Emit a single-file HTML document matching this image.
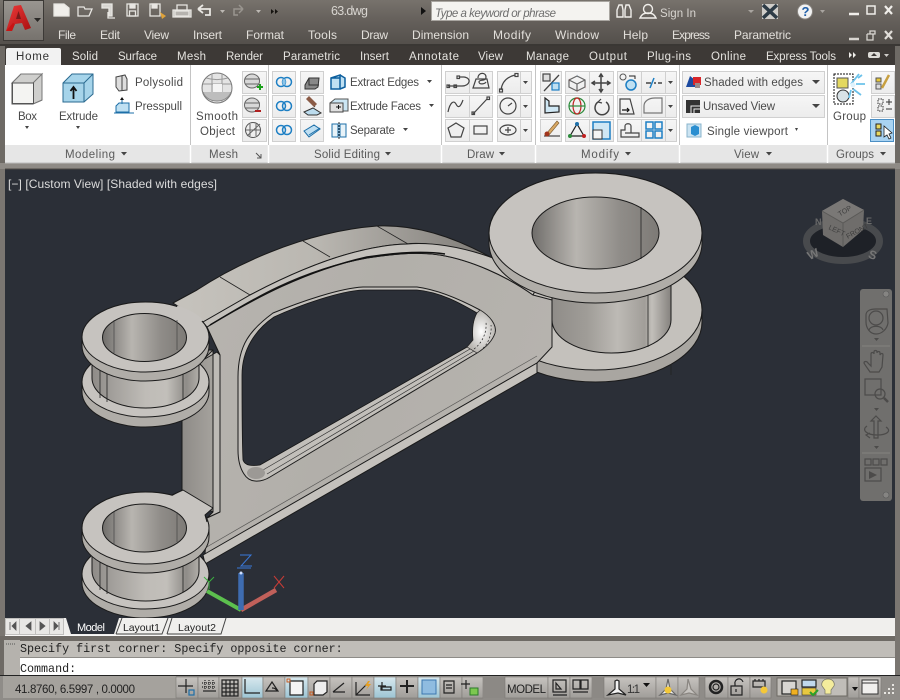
<!DOCTYPE html>
<html><head><meta charset="utf-8"><style>
html,body{margin:0;padding:0;background:#6e6a65;width:900px;height:700px;overflow:hidden}
svg{display:block}
text{font-family:"Liberation Sans",sans-serif;font-size:11.5px}
.m text{fill:#e2dfda;font-size:12px}
.t text{fill:#e4e2de;font-size:11.5px}
.r text{fill:#4a4a4a;font-size:11.5px}
.p text{fill:#5a5a5a;font-size:11.5px}
.b{fill:url(#btn);stroke:#d0d0d0;stroke-width:1}
.k{fill:none;stroke:#444;stroke-width:1.2}
.bl{fill:none;stroke:#1d7fc4;stroke-width:1.5}
.e{stroke:#1a1a1a;stroke-width:1;stroke-linejoin:round}
.l{stroke:#222;stroke-width:.8;fill:none}
.s{fill:url(#sbtn);stroke:#7c7975;stroke-width:.6}
.sb{fill:url(#sblue);stroke:#7c7975;stroke-width:.6}
.si{fill:none;stroke:#222;stroke-width:1.2}
.n{fill:none;stroke:#4c4b4a;stroke-width:1.2}
</style></head><body>
<svg width="900" height="700" viewBox="0 0 900 700" xmlns="http://www.w3.org/2000/svg">
<defs>
<linearGradient id="title" x1="0" y1="0" x2="0" y2="1"><stop offset="0" stop-color="#77726c"/><stop offset=".45" stop-color="#65605b"/><stop offset="1" stop-color="#534f4b"/></linearGradient>
<linearGradient id="btn" x1="0" y1="0" x2="0" y2="1"><stop offset="0" stop-color="#f6f6f6"/><stop offset="1" stop-color="#ececec"/></linearGradient>
<linearGradient id="sbtn" x1="0" y1="0" x2="0" y2="1"><stop offset="0" stop-color="#c6c3bf"/><stop offset="1" stop-color="#a09d99"/></linearGradient>
<linearGradient id="sblue" x1="0" y1="0" x2="0" y2="1"><stop offset="0" stop-color="#d8e8ee"/><stop offset="1" stop-color="#9dc5d4"/></linearGradient>
<linearGradient id="abtn" x1="0" y1="0" x2="0" y2="1"><stop offset="0" stop-color="#9a9691"/><stop offset="1" stop-color="#76726d"/></linearGradient>
<linearGradient id="red" x1="0" y1="0" x2="1" y2="1"><stop offset="0" stop-color="#ee3a3a"/><stop offset="1" stop-color="#a81010"/></linearGradient>
<linearGradient id="cyl" x1="0" y1="0" x2="1" y2="0"><stop offset="0" stop-color="#8e8b87"/><stop offset=".2" stop-color="#a3a09c"/><stop offset=".5" stop-color="#bfbcb7"/><stop offset=".7" stop-color="#c2bfba"/><stop offset=".88" stop-color="#8f8c88"/><stop offset="1" stop-color="#b0ada8"/></linearGradient>
<linearGradient id="cyl2" x1="0" y1="0" x2="1" y2="0"><stop offset="0" stop-color="#8f8c88"/><stop offset=".3" stop-color="#a09d98"/><stop offset=".55" stop-color="#bdbab5"/><stop offset=".78" stop-color="#a19e99"/><stop offset=".84" stop-color="#c2bfba"/><stop offset="1" stop-color="#85827e"/></linearGradient>
<linearGradient id="hole" x1="0" y1="0" x2="1" y2="0"><stop offset="0" stop-color="#6f6d6a"/><stop offset=".2" stop-color="#9a9793"/><stop offset=".35" stop-color="#b8b5b0"/><stop offset=".7" stop-color="#8f8c88"/><stop offset="1" stop-color="#7d7a76"/></linearGradient>
<linearGradient id="arm" x1="0" y1="0" x2="1" y2=".3"><stop offset="0" stop-color="#b7b4af"/><stop offset=".5" stop-color="#b2afaa"/><stop offset="1" stop-color="#b6b3ae"/></linearGradient>
<linearGradient id="band" x1="0" y1="0" x2="1" y2="0"><stop offset="0" stop-color="#c6c3bd"/><stop offset=".45" stop-color="#bab7b1"/><stop offset=".7" stop-color="#9f9c97"/><stop offset="1" stop-color="#7d7a75"/></linearGradient>
<linearGradient id="web" x1="0" y1="0" x2="1" y2="0"><stop offset="0" stop-color="#8e8b87"/><stop offset="1" stop-color="#a5a29d"/></linearGradient>
<radialGradient id="glow" cx=".5" cy=".5" r=".5"><stop offset="0" stop-color="#fff"/><stop offset="1" stop-color="#b8b5b0"/></radialGradient>
</defs>

<!-- frame + title bars -->
<rect width="900" height="45" fill="url(#title)"/>
<rect y="44" width="900" height="2" fill="#3a3734"/>
<rect y="46" width="900" height="19" fill="#3d3936"/>
<rect y="46" width="5" height="122" fill="#6e6a65"/>
<rect x="895" y="46" width="5" height="122" fill="#6e6a65"/>
<rect y="163" width="900" height="6" fill="#8f8b86"/>
<rect x="5" y="65" width="890" height="98" fill="#fff"/>
<rect x="5" y="145" width="890" height="18" fill="#e6e6e6"/>
<path d="M5 163H895" stroke="#bcbcbc"/>

<!-- A button -->
<rect x="3.500" y=".5" width="40" height="40" fill="url(#abtn)" stroke="#3c3936"/>
<path d="M6 31 14 6 21 5 31 28 25 30 22 23 15 24 12 31Z" fill="url(#red)"/>
<path d="M16 19 18.500 11 21 19Z" fill="#7a1a1a"/>
<path d="M6 31 12 31 15 24 13 23Z" fill="#c81414"/>
<path d="M34 18h7l-3.500 4z" fill="#2a2826"/>

<!-- QAT -->
<g fill="none" stroke="#e8e6e2" stroke-width="1.3">
<path d="M54 4h10l5 4v8H54z" fill="#f0eeea"/>
<path d="M78 7h6l1 2h7l-3 7H78z"/><path d="M102 4h10v12h-3v-8h-7z" fill="#d8d6d2"/><path d="M108 12v6h7"/>
<path d="M127 4h11v12h-11z"/><rect x="130" y="4" width="5" height="4" fill="#e8e6e2"/><rect x="129.500" y="11" width="6" height="5"/>
<path d="M150 4h10v12h-10z"/><rect x="152" y="4" width="5" height="4" fill="#e8e6e2"/>
<path d="M175 11h14v5h-14z"/><path d="M177 11V5h10v6"/><path d="M173 10h18v7h-18z" fill="#e8e6e2" fill-opacity=".6"/>
<path d="M198 9h12v6h-5M198 9l5-4M198 9l5 4" stroke-width="1.800"/>
<path d="M243 9h-9v6h4M243 9l-4-4M243 9l-4 4" stroke="#99958f" stroke-width="1.500"/>
</g>
<path d="M160 12l6 4-4 3z" fill="#e0a33a"/>
<path d="M220 10h5l-2.500 3zM256 10h5l-2.500 3z" fill="#bdb9b4"/>
<path d="M271 9l3 2.500-3 2.500zM275 9l3 2.500-3 2.500z" fill="#15130f"/>
<text x="331" y="15" fill="#d8d5d0" style="font-size:12.500px" textLength="37">63.dwg</text>
<path d="M421 7l5 4-5 4z" fill="#111"/>
<rect x="431.500" y="1.500" width="178" height="19" fill="#f4f3f0" stroke="#a9a6a1"/>
<text x="435" y="17" fill="#6d6d6d" style="font-size:11.500px;font-style:italic" textLength="121">Type a keyword or phrase</text>
<g fill="none" stroke="#f0eeea" stroke-width="1.400">
<path d="M617 17v-7l2-5h3l1 5v7h-6zM625 17v-7l1-5h3l2 5v7h-6z"/>
<circle cx="648" cy="9" r="4.500"/><path d="M640 18c2-4 4-5 8-5s6 1 8 5z"/>
</g>
<text x="660" y="17" fill="#d8d5d0" textLength="36">Sign In</text>
<path d="M748 10h6l-3 3z" fill="#a9a5a0"/>
<rect x="762" y="4" width="16" height="15" fill="#cfcdc9"/><path d="M763 5l14 13M777 5l-14 13" stroke="#2d3b46" stroke-width="3.500"/>
<circle cx="805" cy="11.500" r="7.500" fill="#f2f2f2" stroke="#8a8681"/><text x="801.500" y="16" fill="#1f5ea8" style="font-size:13px;font-weight:bold">?</text>
<path d="M820 10h5l-2.500 3z" fill="#a9a5a0"/>
<path d="M849 14h10" stroke="#f0eeea" stroke-width="2.500"/>
<rect x="867" y="6" width="8" height="8" fill="none" stroke="#f0eeea" stroke-width="1.500"/>
<path d="M885 6l7 8M892 6l-7 8" stroke="#f0eeea" stroke-width="2.200"/>
<path d="M849 39h10" stroke="#d8d5d0" stroke-width="2.500"/>
<path d="M867 34h8v-3h-5v3M867 34v6h6v-6" fill="none" stroke="#d8d5d0" stroke-width="1.300"/>
<path d="M885 31l7 8M892 31l-7 8" stroke="#e0ddd8" stroke-width="2.200"/>

<!-- menu -->
<g class="m">
<text x="58" y="39" textLength="18">File</text><text x="100" y="39" textLength="20">Edit</text><text x="144" y="39" textLength="25">View</text><text x="193" y="39" textLength="29">Insert</text><text x="246" y="39" textLength="38">Format</text><text x="308" y="39" textLength="29">Tools</text><text x="361" y="39" textLength="27">Draw</text><text x="412" y="39" textLength="57">Dimension</text><text x="493" y="39" textLength="38">Modify</text><text x="555" y="39" textLength="44">Window</text><text x="623" y="39" textLength="25">Help</text><text x="672" y="39" textLength="38">Express</text><text x="734" y="39" textLength="57">Parametric</text>
</g>

<!-- tabs -->
<path d="M6 65V50q0-2 2-2h51q2 0 2 2v15z" fill="#f2f2f2"/>
<text x="16" y="60" fill="#333" textLength="33">Home</text>
<g class="t">
<text x="72" y="60" textLength="26">Solid</text><text x="118" y="60" textLength="39">Surface</text><text x="177" y="60" textLength="29">Mesh</text><text x="226" y="60" textLength="37">Render</text><text x="283" y="60" textLength="57">Parametric</text><text x="360" y="60" textLength="29">Insert</text><text x="409" y="60" textLength="50">Annotate</text><text x="478" y="60" textLength="25">View</text><text x="526" y="60" textLength="43">Manage</text><text x="589" y="60" textLength="38">Output</text><text x="647" y="60" textLength="44">Plug-ins</text><text x="711" y="60" textLength="35">Online</text><text x="766" y="60" textLength="70">Express Tools</text>
</g>
<path d="M849 52l3 3-3 3zM853 52l3 3-3 3z" fill="#f0eeea"/>
<rect x="868" y="52" width="12" height="6" rx="2" fill="#dedcd8"/><path d="M871 56l3-3 3 3z" fill="#3d3936"/><path d="M884 54h5l-2.500 3z" fill="#cfcdc9"/>

<!-- panel seps -->
<g stroke="#c4c4c4"><path d="M190.500 65V163M268.500 65V163M441.500 65V163M535.500 65V163M679.500 65V163M827.500 65V163"/></g>
<g stroke="#fff" stroke-width="1.500"><path d="M190.500 145V163M268.500 145V163M441.500 145V163M535.500 145V163M679.500 145V163M827.500 145V163"/></g>

<!-- large icons -->
<path d="M12 83l9-9h21v26l-9 4H12z" fill="#f0f0ee" stroke="#555"/><path d="M33 83h-21l9-9h21zM33 83l9-9v26l-9 4z" fill="#cfcfcd" stroke="#777"/><rect x="12.500" y="83" width="21" height="20.500" fill="#f4f4f2" stroke="#555"/>
<path d="M63 83l9-9h21v20l-9 8H63z" fill="#a6d4ea" stroke="#2a6a90"/><path d="M63 83h21l9-9M84 83v19" fill="none" stroke="#2a6a90"/><path d="M73.500 99V88M70.500 91l3-4 3 4" fill="none" stroke="#111" stroke-width="1.800"/>
<path d="M116 77l9-2 2 4v11l-8 1-3-4z" fill="#ddd" stroke="#444"/><path d="M122 76v15" stroke="#444"/>
<path d="M116 112h13v-9h-10l-3 3zM114 113h20M122 99v5" fill="#bfe0f2" stroke="#1d6fa8"/><path d="M122 97l-2 3h4z" fill="#111"/>
<circle cx="217" cy="88" r="15" fill="#e4e4e4" stroke="#777"/><path d="M203 84h28M206 78c7 2 15 2 22 0M212 74v28M222 74v28" stroke="#999" fill="none"/><rect x="213" y="84" width="9" height="9" fill="#f4f4f4"/><path d="M203 92c4 12 24 12 28 0" fill="#bdbdbd" stroke="#888"/>

<!-- dropdown arrows -->
<g fill="#444"><path d="M25 126h4l-2 3zM76 126h4l-2 3zM427 80h5l-2.500 3zM429 104h5l-2.500 3zM403 128h5l-2.500 3zM121 152h6l-3 3.500zM385 152h6l-3 3.500zM499 152h6l-3 3.500zM625 152h6l-3 3.500zM766 152h6l-3 3.500zM880 152h6l-3 3.500z"/></g>
<path d="M256 153l5 5M261 154v4h-4" fill="none" stroke="#555"/>
<path d="M795 128h3l-1.500 3z" fill="#444"/>

<!-- small buttons -->
<g>
<rect class="b" x="242.500" y="71.500" width="24" height="22"/><rect class="b" x="242.500" y="95.500" width="24" height="22"/><rect class="b" x="242.500" y="119.500" width="24" height="22"/>
<rect class="b" x="272.500" y="71.500" width="23" height="22"/><rect class="b" x="272.500" y="95.500" width="23" height="22"/><rect class="b" x="272.500" y="119.500" width="23" height="22"/>
<rect class="b" x="300.500" y="71.500" width="23" height="22"/><rect class="b" x="300.500" y="95.500" width="23" height="22"/><rect class="b" x="300.500" y="119.500" width="23" height="22"/>
<rect class="b" x="445.500" y="71.500" width="24" height="22"/><rect class="b" x="469.500" y="71.500" width="23" height="22"/><rect class="b" x="497.500" y="71.500" width="23" height="22"/><rect class="b" x="520.500" y="71.500" width="11" height="22"/>
<rect class="b" x="445.500" y="95.500" width="24" height="22"/><rect class="b" x="469.500" y="95.500" width="23" height="22"/><rect class="b" x="497.500" y="95.500" width="23" height="22"/><rect class="b" x="520.500" y="95.500" width="11" height="22"/>
<rect class="b" x="445.500" y="119.500" width="24" height="22"/><rect class="b" x="469.500" y="119.500" width="23" height="22"/><rect class="b" x="497.500" y="119.500" width="23" height="22"/><rect class="b" x="520.500" y="119.500" width="11" height="22"/>
<rect class="b" x="540.500" y="71.500" width="21" height="22"/><rect class="b" x="540.500" y="95.500" width="21" height="22"/><rect class="b" x="540.500" y="119.500" width="21" height="22"/>
<rect class="b" x="565.500" y="71.500" width="24" height="22"/><rect class="b" x="589.500" y="71.500" width="24" height="22"/><rect class="b" x="565.500" y="95.500" width="24" height="22"/><rect class="b" x="589.500" y="95.500" width="24" height="22"/><rect class="b" x="565.500" y="119.500" width="24" height="22"/><rect class="b" x="589.500" y="119.500" width="24" height="22"/>
<rect class="b" x="617.500" y="71.500" width="24" height="22"/><rect class="b" x="641.500" y="71.500" width="24" height="22"/><rect class="b" x="665.500" y="71.500" width="11" height="22"/>
<rect class="b" x="617.500" y="95.500" width="24" height="22"/><rect class="b" x="641.500" y="95.500" width="24" height="22"/><rect class="b" x="665.500" y="95.500" width="11" height="22"/>
<rect class="b" x="617.500" y="119.500" width="24" height="22"/><rect class="b" x="641.500" y="119.500" width="24" height="22"/><rect class="b" x="665.500" y="119.500" width="11" height="22"/>
<rect class="b" x="682.500" y="71.500" width="142" height="22"/><rect class="b" x="682.500" y="95.500" width="142" height="22"/>
<rect class="b" x="871.500" y="71.500" width="23" height="22"/><rect class="b" x="871.500" y="95.500" width="23" height="22"/><rect x="870.500" y="119.500" width="23" height="22" fill="#a9d3f2" stroke="#4c8fc4"/>
</g>
<g fill="#444"><path d="M523 81h5l-2.500 3zM523 105h5l-2.500 3zM523 129h5l-2.500 3zM668 81h5l-2.500 3zM668 105h5l-2.500 3zM668 129h5l-2.500 3zM812 80h8l-4 4zM812 104h8l-4 4z"/></g>

<!-- ribbon text (after buttons) -->
<g class="r">
<text x="135" y="86" textLength="48">Polysolid</text><text x="135" y="110" textLength="47">Presspull</text><text x="18" y="120" textLength="19">Box</text><text x="59" y="120" textLength="39">Extrude</text><text x="196" y="120" textLength="42">Smooth</text><text x="200" y="135" textLength="35">Object</text><text x="350" y="86" textLength="69">Extract Edges</text><text x="350" y="110" textLength="71">Extrude Faces</text><text x="350" y="134" textLength="45">Separate</text><text x="704" y="86" textLength="99">Shaded with edges</text><text x="703" y="110" textLength="72">Unsaved View</text><text x="707" y="135" textLength="81">Single viewport</text><text x="833" y="120" textLength="33">Group</text>
</g>
<g class="p">
<text x="65" y="158" textLength="50">Modeling</text><text x="209" y="158" textLength="29">Mesh</text><text x="314" y="158" textLength="66">Solid Editing</text><text x="467" y="158" textLength="27">Draw</text><text x="581" y="158" textLength="38">Modify</text><text x="734" y="158" textLength="25">View</text><text x="836" y="158" textLength="38">Groups</text>
</g>

<!-- mesh small icons -->
<g fill="#d8d8d8" stroke="#666"><ellipse cx="252" cy="81" rx="7.500" ry="7"/><ellipse cx="252" cy="105" rx="7.500" ry="7"/></g>
<path d="M245 79h15M245 84h14M245 103h15M245 108h14" stroke="#666"/>
<path d="M257 87h6M260 84v6" stroke="#1aa01a" stroke-width="2" fill="none"/>
<path d="M255 111h6" stroke="#b02020" stroke-width="2"/>
<circle cx="253" cy="130" r="7.500" fill="#eee" stroke="#555"/><path d="M247 136l13-12M250 124v12M256 124v12M246 130h14" stroke="#666" fill="none"/>

<!-- solid editing icons -->
<g class="bl"><circle cx="281" cy="82" r="4.500"/><circle cx="287" cy="82" r="4.500"/><circle cx="281" cy="106" r="4.500"/><circle cx="287" cy="106" r="4.500"/><circle cx="281" cy="130" r="4.500"/><circle cx="287" cy="130" r="4.500"/></g>
<path d="M284 78.500a4.500 4.500 0 0 1 0 7a4.500 4.500 0 0 1 0-7z" fill="#8cc4e8"/>
<path d="M305 85l4-7h10l-1 9-3 2h-10z" fill="#888" stroke="#333"/><path d="M309 78v7h10" fill="none" stroke="#333"/>
<path d="M304 112l9-4 8 5-4 2h-9zM307 99l8 8" fill="#bcdcee" stroke="#333"/><path d="M306 99l3-3 8 8-3 3z" fill="#8a5a45"/>
<path d="M304 131l10-6 6 4-11 8z" fill="#bfdff2" stroke="#1d6fa8"/><path d="M309 135l11-7" stroke="#1d6fa8"/>
<path d="M331 78l9-3v14h-9zM331 78h9M340 75l5 3v9l-5 2" fill="#bfe0f2" stroke="#0c5f9e" stroke-width="1.500"/>
<path d="M330 103l5-4h13v12h-18z" fill="#cbe6f4" stroke="#555"/><path d="M330 103h13v9h-13z" fill="#e0e0e0" stroke="#444"/><path d="M336 107h5M338.500 105v4" stroke="#111"/>
<path d="M332 124h6v13h-6zM340 124h6v13h-6z" fill="#e8f3f9" stroke="#1d6fa8"/><path d="M339 122v18" stroke="#333" stroke-dasharray="2 1"/>

<!-- draw icons -->
<g class="k">
<path d="M448 86h6l2 0h6c8 0 10-8 2-9h-5"/><rect x="447" y="85" width="2.500" height="2.500"/><rect x="454" y="85" width="2.500" height="2.500"/><rect x="457" y="76" width="2.500" height="2.500"/>
<path d="M473 88l3-9h11l2 9zM478 78c0-6 8-6 8-1s-7 2-7 5 6 2 7 0"/>
<path d="M501 90c1-8 6-13 14-15"/><rect x="499.500" y="89" width="3" height="3"/><rect x="515" y="73.500" width="3" height="3"/>
<path d="M448 112c2-10 6-12 8-8s4 4 7-4"/><path d="M473 114l14-15"/><rect x="472" y="112" width="2.500" height="2.500"/><rect x="487" y="97" width="2.500" height="2.500"/>
<circle cx="508" cy="106" r="8"/><path d="M508 106l4-3"/><path d="M456 123l8 5-3 9h-10l-3-9z" fill="#efefef"/>
<rect x="474" y="126" width="13" height="8"/><ellipse cx="508" cy="130" rx="8" ry="5"/><path d="M505 130h6M508 127v6"/>
</g>
<!-- modify icons -->
<g class="k">
<rect x="543" y="74" width="7" height="7" fill="#ddd"/><path d="M544 91l15-16" stroke-width="1.300"/>
<rect x="552" y="83" width="7" height="7" fill="#bfe0f2" stroke="#1d7fc4"/>
<path d="M545 113V98l4 3v5h10v6z" fill="#cfe7f4" stroke="#222"/>
<path d="M577 76l8 4v7l-8 4-8-4v-7z" stroke="#666"/><path d="M569 80l8 4 8-4M577 84v7" stroke="#666"/>
<path d="M601 75v16M593 83h16M599 77l2-3 2 3M599 89l2 3 2-3M595 81l-3 2 3 2M607 81l3 2-3 2" stroke-width="1.500"/>
<ellipse cx="577" cy="106" rx="8" ry="8" stroke="#2a8a3a"/><ellipse cx="577" cy="106" rx="4" ry="8" stroke="#c02020"/><path d="M569 106h16" stroke="#2a8a3a"/>
<path d="M606 102a7 7 0 1 1-8 0" stroke-width="1.500"/><path d="M601 99l-3 3 4 1" stroke-width="1.200"/>
<path d="M544 136h16"/>
<path d="M577 124l-7 12h14z" stroke="#222" stroke-width="1.200"/>
<path d="M620 114v-15h10l4 15z"/><path d="M622 110h7M627 108l2 2-2 2" stroke="#111"/>
<path d="M644 113v-7c0-5 5-8 11-8h7v15z" stroke="#777"/>
<path d="M621 137h18v-4h-8v-7c0-3-6-3-6 0v4h-4z M625 133h10"/>
</g>
<path d="M546 134l11-13 2 2-10 12z" fill="#d8a864" stroke="#7a5a30" stroke-width=".6"/><circle cx="547" cy="134" r="2.500" fill="#a0341c"/>
<circle cx="570" cy="136" r="2" fill="#2a8a3a"/><circle cx="584" cy="136" r="2" fill="#c02020"/><circle cx="577" cy="124" r="2" fill="#1d6fa8"/>
<path d="M569 80h.1M585 87h.1M577 91h.1" stroke="#c02020" stroke-width="3"/><path d="M577 76h.1" stroke="#1d7fc4" stroke-width="3"/>
<rect x="593" y="122" width="17" height="17" fill="#cfe7f4" stroke="#1d7fc4" stroke-width="1.500"/><rect x="593" y="130" width="9" height="9" fill="#f4f4f4" stroke="#333"/>
<circle cx="623" cy="77" r="3" fill="none" stroke="#555"/><circle cx="631" cy="85" r="5" fill="#bfe0f2" stroke="#1d7fc4" stroke-width="1.500"/><path d="M629 76h6v3" stroke="#222" fill="none"/>
<path d="M646 83h5M654 83h2M658 83h4" stroke="#222" stroke-width="1.300"/><path d="M650 88l4-10" stroke="#1d7fc4" stroke-width="1.500"/>
<rect x="646" y="122" width="7" height="7" fill="none" stroke="#1d7fc4" stroke-width="1.500"/><rect x="655" y="122" width="7" height="7" fill="none" stroke="#1d7fc4" stroke-width="1.500"/><rect x="646" y="131" width="7" height="7" fill="none" stroke="#1d7fc4" stroke-width="1.500"/><rect x="655" y="131" width="7" height="7" fill="none" stroke="#1d7fc4" stroke-width="1.500"/>
<!-- view icons -->
<path d="M686 87l4-11 5 4v7z" fill="#1c4aa0"/><rect x="693" y="77" width="8" height="8" fill="#d8262a"/><rect x="695" y="83" width="5" height="5" fill="#9a8a8a"/>
<rect x="686" y="100" width="14" height="13" fill="#333"/><path d="M691 113v-7h9M694 113v-4h6" stroke="#eee" fill="none"/>
<rect x="687" y="124" width="14" height="13" fill="#cce4f2" stroke="#8ab4cc"/><path d="M691 127l4-2 4 2v7l-4 2-4-2z" fill="#2a8ed0"/>
<!-- group -->
<rect x="834" y="74" width="19" height="30" fill="none" stroke="#111" stroke-dasharray="2 1"/>
<rect x="837" y="78" width="11" height="10" fill="#e4d860" stroke="#555"/><circle cx="843" cy="96" r="6" fill="#d8e2e6" stroke="#333"/>
<path d="M851 84l8-10M856 84h9M853 89l8 6M851 90l-2 8M858 78l4-3" stroke="#6cc2ea" stroke-width="1.800"/><circle cx="853" cy="85" r="2.500" fill="#dff2fc"/>
<rect x="876" y="78" width="5" height="4" fill="#e8c838" stroke="#555"/><rect x="876" y="84" width="5" height="5" fill="#ddd" stroke="#555"/><path d="M882 88l7-13" stroke="#c8a040" stroke-width="2.500"/>
<path d="M878 99h5v5h-5zM878 106h5v5h-5z" fill="none" stroke="#333" stroke-dasharray="1.500 1"/><path d="M886 102h6M889 99v6M886 109h6" stroke="#333"/>
<path d="M876 124h5v5h-5zM876 131h5v5h-5z" fill="#e8d860" stroke="#222"/><path d="M884 126v11l3-2 2 4 2-1-2-4 3-1z" fill="#fff" stroke="#222" stroke-width=".8"/>

<!-- viewport -->
<rect x="5" y="169" width="890" height="449" fill="#2b2f37"/>
<path d="M5 169H895" stroke="#4c4844"/>

<!-- model -->
<g>
<!-- web -->
<path d="M182 405V495L213 512V350H190Z" fill="url(#web)" class="e"/>
<path d="M203 360 217 352 220 355V512L207 518 213 512V350Z" fill="#bdbab5" class="e"/>
<!-- big ring lower flange -->
<path d="M489 310a106.500 60 0 0 1 213 0v12a106.500 60 0 0 1-213 0z" fill="#a9a6a1" class="e"/>
<ellipse cx="595.500" cy="310" rx="106.500" ry="60" fill="#c4c1bc" class="e"/>
<path d="M671 364v11" class="l"/>
<!-- upper band -->
<path d="M173 303 197 290C230 268 300 232 377 226 420 224 460 240 492 258 460 246 420 242 407 244 370 245 320 258 250 295L203 322Z" fill="url(#band)" class="e"/>
<path d="M220 277 250 295M303 241 330 257M377 226 408 244" class="l"/>
<!-- arm face -->
<path d="M207 327C250 300 300 270 367 258 400 253 420 252 440 255 470 260 505 275 533 295L552 300V347L537 363 205 555 207 518 220 512V355Z" fill="url(#arm)" class="e"/>
<!-- strip between band and arm -->
<path d="M203 322 250 295C320 258 370 245 407 244 430 242 460 246 493 258L538 285 533 295C505 275 470 260 440 255 420 252 400 253 367 258 300 270 250 300 207 327Z" fill="#c4c1bc" class="e"/>
<path d="M210 322C255 295 305 268 367 254 400 249 425 248 445 251" stroke="#111" stroke-width="1.500" fill="none" transform="translate(0 3)"/>
<!-- arm lower side -->
<path d="M203 555 537 363V373L205 564Z" fill="#c4c1bc" class="e"/>
<path d="M205 548 537 356" stroke="#333" stroke-width=".7" fill="none" opacity=".7"/>
<!-- hole wall -->
<path d="M238 377C238 345 250 330 273 313 300 302 340 288 363 287L417 287C440 290 465 302 480 310 490 316 497 325 495 333 492 342 485 348 477 353L270 477C262 482 250 484 244 474 240 468 238 460 238 450Z" fill="#c2bfba" class="e"/>
<!-- hole dark -->
<path d="M242 375C242 350 255 330 274 317 300 305 340 291 363 290L417 290C440 292 460 303 477 313 473 320 472 330 473 340L467 347 260 465C252 466 245 466 243 460 242 440 242 400 242 375Z" fill="#2b2f37" stroke="#151515" stroke-width=".8"/>
<path d="M467 347 477 353C485 348 492 342 495 333 497 325 490 316 480 310L477 313C473 320 472 330 473 340Z" fill="url(#glow)" stroke="#222" stroke-width=".7"/>
<path d="M474 349C482 343 487 333 486 322M480 351C488 345 492 335 491 325" stroke="#222" stroke-dasharray="2 2" fill="none" stroke-width=".7"/>
<path d="M263 470 470 349M267 474 474 351" stroke="#333" stroke-width=".7" fill="none"/>
<ellipse cx="256" cy="473" rx="9" ry="6" fill="#9c9995"/>
<!-- big ring core & top -->
<path d="M552 280V320A59.500 33 0 0 0 671 320V280Z" fill="url(#cyl2)" class="e"/>
<path d="M648 292V347" class="l"/>
<path d="M489 233a106.500 60 0 0 1 213 0v10a106.500 60 0 0 1-213 0z" fill="#b0ada8" class="e"/>
<ellipse cx="595.500" cy="233" rx="106.500" ry="60" fill="#c6c3bf" class="e"/>
<ellipse cx="595.500" cy="233" rx="63.500" ry="36" fill="url(#hole)" class="e"/>
<path d="M641 207V259" class="l"/>
<!-- upper-left ring -->
<path d="M82 382a63.500 35 0 0 1 127 0v10a63.500 35 0 0 1-127 0z" fill="#b0ada8" class="e"/>
<ellipse cx="145.500" cy="382" rx="63.500" ry="35" fill="#c6c3bf" class="e"/>
<path d="M92 345V378A53.500 30 0 0 0 199 378V345Z" fill="url(#cyl)" class="e"/>
<path d="M100 350V398M107 350V402M183 350V400" class="l"/>
<path d="M82 337a63.500 35 0 0 1 127 0v9a63.500 35 0 0 1-127 0z" fill="#b0ada8" class="e"/>
<ellipse cx="145.500" cy="337" rx="63.500" ry="35" fill="#c6c3bf" class="e"/>
<path d="M177 307Q195 313 202 321" stroke="#c6c3bf" stroke-width="3" fill="none"/>
<ellipse cx="144.500" cy="337.500" rx="42" ry="24" fill="url(#hole)" class="e"/>
<path d="M114 320V353M177 320V350" stroke="#444" stroke-width=".7"/>
<!-- lower-left ring -->
<path d="M82 574a63.500 35 0 0 1 127 0v9a63.500 35 0 0 1-127 0z" fill="#b0ada8" class="e"/>
<ellipse cx="145.500" cy="574" rx="63.500" ry="35" fill="#c6c3bf" class="e"/>
<path d="M92 538V571A53.500 30 0 0 0 199 571V538Z" fill="url(#cyl)" class="e"/>
<path d="M100 545V590M107 545V594M183 545V592" class="l"/>
<path d="M82 528a63.500 36 0 0 1 127 0v9a63.500 36 0 0 1-127 0z" fill="#b0ada8" class="e"/>
<ellipse cx="145.500" cy="528" rx="63.500" ry="36" fill="#c6c3bf" class="e"/>
<path d="M172 496 183 490 213 508 205 515 207 522 195 515 175 500Z" fill="#c6c3bf"/>
<path d="M172 495 183 490 213 508 205 515 207 522" fill="none" class="e"/>
<ellipse cx="144.500" cy="528" rx="42" ry="24" fill="url(#hole)" class="e"/>
<path d="M114 512V545M177 512V542" stroke="#444" stroke-width=".7"/>
</g>

<!-- UCS -->
<path d="M241 610 207 591" stroke="#5cc04e" stroke-width="4"/>
<path d="M241 610 276 590" stroke="#c0605a" stroke-width="4.500"/>
<path d="M241 610V573" stroke="#3e6cb0" stroke-width="5.500"/>
<circle cx="241" cy="573" r="1.500" fill="#cfe0ff"/>
<path d="M240 555h11l-10 11h11M237 568h14" stroke="#3a78d8" fill="none" stroke-width="1"/>
<path d="M274 576l10 12M284 576l-10 12" stroke="#c83c36" fill="none"/>
<path d="M204 577l5 5 5-5M209 582v7" stroke="#3cb040" fill="none"/>

<!-- label -->
<text x="8" y="188" fill="#dcdcdc" style="font-size:12px" textLength="209">[−] [Custom View] [Shaded with edges]</text>

<!-- viewcube -->
<ellipse cx="843" cy="241" rx="36.500" ry="19.500" fill="#1e2127" stroke="#484a4d" stroke-width="7"/>
<path d="M843 199 864 210 863 230 843 247 823 235 822 211Z" fill="#6f6d6b"/>
<path d="M843 199 864 210 843 223 822 211Z" fill="#7a7876"/>
<path d="M843 223V247M822 211 843 223 864 210" stroke="#5a5957" fill="none"/>
<text x="837" y="214" fill="#3e3e3e" style="font-size:7px" transform="rotate(-30 843 210)">TOP</text>
<text x="829" y="231" fill="#3e3e3e" style="font-size:7px" transform="rotate(25 833 228)">LEFT</text>
<text x="845" y="236" fill="#3e3e3e" style="font-size:7px" transform="rotate(-28 852 232)">FRONT</text>
<text x="807" y="258" fill="#767676" style="font-size:12px;font-weight:bold" transform="rotate(-25 813 253)">W</text>
<text x="869" y="259" fill="#767676" style="font-size:12px;font-weight:bold" transform="rotate(20 873 254)">S</text>
<text x="815" y="225" fill="#6a6a6a" style="font-size:9px;font-weight:bold">N</text>
<text x="866" y="224" fill="#6a6a6a" style="font-size:9px;font-weight:bold">E</text>

<!-- navbar -->
<rect x="860" y="289" width="32" height="212" rx="3" fill="#706f6d"/>
<circle cx="886" cy="294" r="3" fill="#858482" stroke="#5a5a5a" stroke-width=".6"/>
<circle cx="886" cy="495" r="3" fill="#858482" stroke="#5a5a5a" stroke-width=".6"/>
<g class="n">
<path d="M866 315c0-4 4-6 10-6h11l1 14c-1 6-6 11-12 11s-10-6-10-12z"/><circle cx="876" cy="318" r="7"/><path d="M869 330c2-5 12-5 14 0"/>
<path d="M862 346h28M862 453h28" stroke="#807f7d"/>
<path d="M870 372c-2-3-5-7-6-9 0-2 3-2 4 0l3 3 0-12c0-2 3-2 3 0v-2c0-2 3-2 3 0v1c0-2 3-2 3 0v2c1-2 3-2 3 0l-1 12-3 5z"/>
<rect x="865" y="379" width="16" height="16"/><circle cx="880" cy="394" r="5"/><path d="M884 398l4 4" stroke-width="2.500"/>
<path d="M876 416l5 5h-3v17h-4v-17h-3zM867 426c-6 4 0 9 10 9s15-4 9-8M870 433l-4 2 4 3"/>
<rect x="865" y="459" width="6" height="6"/><rect x="873" y="459" width="6" height="6"/><rect x="881" y="459" width="6" height="6"/><rect x="865" y="468" width="16" height="13"/>
</g>
<path d="M869 471l8 4-8 4zM874 338h5l-2.500 3zM874 408h5l-2.500 3zM874 446h5l-2.500 3z" fill="#4c4b4a"/>

<!-- layout tabs -->
<rect x="4" y="618" width="892" height="18" fill="#f0efed"/>
<path d="M4 636H896" stroke="#fff"/>
<g fill="#e8e7e5" stroke="#c0bfbd"><rect x="5.500" y="618.500" width="14" height="16"/><rect x="19.500" y="618.500" width="16" height="16"/><rect x="35.500" y="618.500" width="14" height="16"/><rect x="49.500" y="618.500" width="14" height="16"/></g>
<path d="M10 622v8M16 622l-4 4 4 4z M31 622l-5 4 5 4z M40 622l5 4-5 4z M54 622l4 4-4 4zM59 622v8" fill="#555" stroke="#555" stroke-width=".8"/>
<path d="M66 618 71 634H114L119 618Z" fill="#2b2f37"/>
<path d="M116 634 122 618M168 618 162 634H116M172 618 167 634M226 618 221 634H167" fill="none" stroke="#444"/>
<text x="77" y="631" fill="#fff" style="font-size:11px" textLength="28">Model</text>
<text x="123" y="631" fill="#222" style="font-size:10.500px" textLength="37">Layout1</text>
<text x="178" y="631" fill="#222" style="font-size:10.500px" textLength="38">Layout2</text>

<!-- command -->
<rect x="0" y="636" width="900" height="5" fill="#6e6a65"/>
<rect x="4" y="640" width="16" height="36" fill="#b5b2ad"/>
<path d="M6 644h10" stroke="#555" stroke-dasharray="1 1"/>
<rect x="20" y="641" width="875" height="17" fill="#c0bdb8"/>
<path d="M20 657.500H895" stroke="#8e8c88"/>
<rect x="20" y="658" width="875" height="17" fill="#fff"/>
<text x="20" y="652" fill="#222" style="font-family:'Liberation Mono',monospace;font-size:11.700px">Specify first corner: Specify opposite corner:</text>
<text x="20" y="672" fill="#222" style="font-family:'Liberation Mono',monospace;font-size:11.700px">Command:</text>

<!-- status -->
<rect x="0" y="675" width="900" height="25" fill="#8f8c88"/>
<path d="M0 675.500H900" stroke="#222"/>
<rect x="3" y="676" width="173" height="22" fill="#a5a29d"/>
<text x="15" y="693" fill="#222" textLength="120">41.8760, 6.5997 , 0.0000</text>
<g>
<rect class="s" x="176" y="677" width="22" height="21"/><rect class="s" x="198" y="677" width="21" height="21"/><rect class="s" x="219" y="677" width="23" height="21"/><rect class="sb" x="242" y="677" width="21" height="21"/><rect class="s" x="263" y="677" width="22" height="21"/><rect class="sb" x="285" y="677" width="23" height="21"/><rect class="s" x="308" y="677" width="22" height="21"/><rect class="s" x="330" y="677" width="22" height="21"/><rect class="s" x="352" y="677" width="22" height="21"/><rect class="sb" x="374" y="677" width="22" height="21"/><rect class="s" x="396" y="677" width="22" height="21"/><rect class="sb" x="418" y="677" width="22" height="21"/><rect class="s" x="440" y="677" width="22" height="21"/><rect class="s" x="462" y="677" width="21" height="21"/>
<rect x="483" y="677" width="22" height="21" fill="#8c8985"/>
<rect class="s" x="505" y="677" width="43" height="21"/><rect class="s" x="548" y="677" width="22" height="21"/><rect class="s" x="570" y="677" width="22" height="21"/>
<rect x="592" y="677" width="12" height="21" fill="#8c8985"/>
<rect class="s" x="604" y="677" width="52" height="21"/><rect class="s" x="656" y="677" width="22" height="21"/><rect class="s" x="678" y="677" width="21" height="21"/>
<rect class="s" x="705" y="677" width="23" height="21"/><rect class="s" x="728" y="677" width="22" height="21"/><rect class="s" x="750" y="677" width="21" height="21"/>
<rect x="777" y="678" width="70" height="18" fill="#c0bdb8" stroke="#6e6a65"/>
<rect class="s" x="848" y="677" width="11" height="21"/><rect class="s" x="859" y="677" width="22" height="21"/>
</g>
<text x="507" y="693" fill="#222" textLength="39">MODEL</text>
<text x="627" y="693" fill="#333" textLength="13">1:1</text>
<path d="M643 683h7l-3.500 4zM852 687h6l-3 4z" fill="#111"/>
<g class="si">
<path d="M178 686h15M186 679v14"/><rect x="189" y="690" width="5" height="5" stroke="#1d6fa8"/>
<path d="M202 683h14M202 687h14M205 680v10M209 680v10M213 680v10" stroke-dasharray="1 1"/><path d="M203 691h13"/>
<path d="M222 680h16v16h-16zM222 684h16M222 688h16M222 692h16M226 680v16M230 680v16M234 680v16"/>
<path d="M245 679v14h15"/>
<path d="M266 691h12l-6-9zM272 688a5 5 0 0 1 5 3"/>
<path d="M290 681h13v14h-13z" fill="#f4f4f4"/>
<path d="M314 684l3-3h10v11l-4 3h-9z" fill="#ededed"/>
<path d="M333 692l11-9M333 692h12"/>
<path d="M356 682v13h14M356 695l12-12"/>
<path d="M378 686h8M382 682v8M381 690h10v-3h-10z"/>
<path d="M400 686h14M407 680v13" stroke-width="2"/>
<path d="M444 681h10v12h-10zM446 685h6M446 688h6"/>
<path d="M466 680v9M461 684h9"/>
<path d="M553 680h13v12h-13zM553 695h14M556 689v-6l5 6z"/>
<path d="M573 680h7v9h-7zM581 680h7v9h-7zM573 692h15"/>
<path d="M608 695l7-6v-8l2-1 2 1v8l7 6-8-2z" fill="#f2f2f2"/>
<path d="M660 695l6-6 2-10 2 10 6 6-8-2z" fill="#f2f2f2" stroke="#666"/>
<path d="M681 695l6-6 1-10 3 10 6 6-8-2z" fill="#c6c3bf" stroke="#8a8681"/>
<circle cx="716" cy="687" r="6" stroke-width="2.500"/><circle cx="716" cy="687" r="3"/>
<path d="M731 686h11v9h-11zM735 686v-2a4 4 0 0 1 8-2" /><path d="M736 689v3"/>
<path d="M753 681h12v6h-12zM755 679v2M759 679v2M763 679v2"/>
<rect x="782" y="681" width="14" height="13" fill="#d8d6d2"/>
<rect x="802" y="680" width="14" height="7" fill="#c0d8ec"/>
</g>
<circle cx="668" cy="690" r="3.500" fill="#f4c838"/><circle cx="764" cy="690" r="3.500" fill="#f4c838"/><rect x="791" y="689" width="7" height="6" fill="#f0b020" stroke="#222" stroke-width=".6"/>
<path d="M802 688h14v7h-14z" fill="#e8c840" stroke="#222" stroke-width=".6"/><path d="M810 692l3 3 5-5" stroke="#2aa02a" stroke-width="2" fill="none"/>
<path d="M828 679c-5 0-7 4-6 7l3 4v4h6v-4l3-4c1-3-1-7-6-7z" fill="#f4ec9c" stroke="#776" stroke-width=".7"/>
<rect x="287" y="679" width="3" height="3" fill="none" stroke="#c55a20"/><rect x="310" y="692" width="3" height="3" fill="none" stroke="#c55a20"/>
<path d="M372 684l-3 5h3l-2 4 5-6h-3l2-3z" fill="#e8a020" transform="translate(-4 -3)"/>
<rect x="422" y="680" width="14" height="14" fill="#8fbce0" stroke="#3c78b0"/>
<rect x="470" y="688" width="8" height="7" fill="#7cc850" stroke="#2a7a2a"/>
<rect x="862" y="680" width="16" height="14" fill="#f0efed" stroke="#333"/><path d="M862 683h16" stroke="#333"/>
<path d="M892 684h2v2h-2zM888 688h2v2h-2zM892 688h2v2h-2zM884 692h2v2h-2zM888 692h2v2h-2zM892 692h2v2h-2z" fill="#e8e6e2"/>
<rect x="895" y="169" width="5" height="506" fill="#7a7671"/>
<rect x="0" y="169" width="5" height="467" fill="#7a7671"/>
</svg>
</body></html>
